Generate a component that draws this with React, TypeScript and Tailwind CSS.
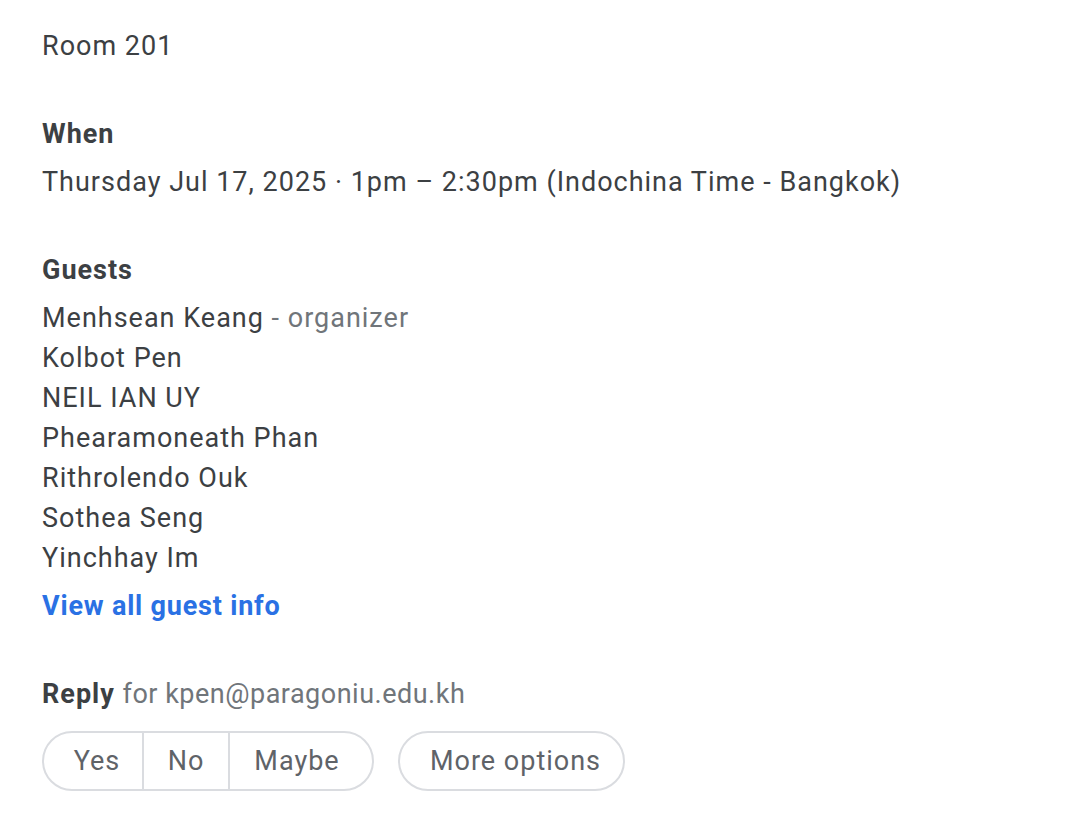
export default function App(){

 const guests = [
  "Kolbot Pen",
  "NEIL IAN UY",
  "Phearamoneath Phan",
  "Rithrolendo Ouk",
  "Sothea Seng",
  "Yinchhay Im"
 ]

 return(

  <div className="min-h-screen bg-white pt-[26px] pl-[42px] text-[27px] tracking-[1px] leading-[40px] text-[#3c4043] font-['Roboto',sans-serif]">

   <div>Room 201</div>

   {/* When */}

   <div className="mt-12 font-bold mb-2">When</div>
   <div>Thursday Jul 17, 2025 · 1pm – 2:30pm (Indochina Time - Bangkok)</div>

   {/* Guests */}

   <div className="mt-12 font-bold mb-2">Guests</div>
   <div>Menhsean Keang <span className="text-[#70757a]">- organizer</span></div>
   {guests.map(g=>(
    <div key={g}>{g}</div>
   ))}

   <div className="mt-2 font-bold text-[#2a71e4] tracking-[0.8px]">View all guest info</div>

   {/* Reply */}

   <div className="mt-12">
    <span className="font-bold">Reply</span> <span className="text-[#70757a] tracking-[0.5px]">for kpen@paragoniu.edu.kh</span>
   </div>

   <div className="flex gap-6 mt-[17px] text-[#5f6368]">

    <div className="flex h-[60px] rounded-full border-2 border-[#dadce0] overflow-hidden">
     <div className="w-[100px] pl-2 flex items-center justify-center border-r-2 border-[#dadce0]">Yes</div>
     <div className="w-[86px] flex items-center justify-center border-r-2 border-[#dadce0]">No</div>
     <div className="w-[142px] pr-2 flex items-center justify-center">Maybe</div>
    </div>

    <div className="w-[227px] h-[60px] pl-2 rounded-full border-2 border-[#dadce0] flex items-center justify-center">
     More options
    </div>

   </div>

  </div>

 )

}
